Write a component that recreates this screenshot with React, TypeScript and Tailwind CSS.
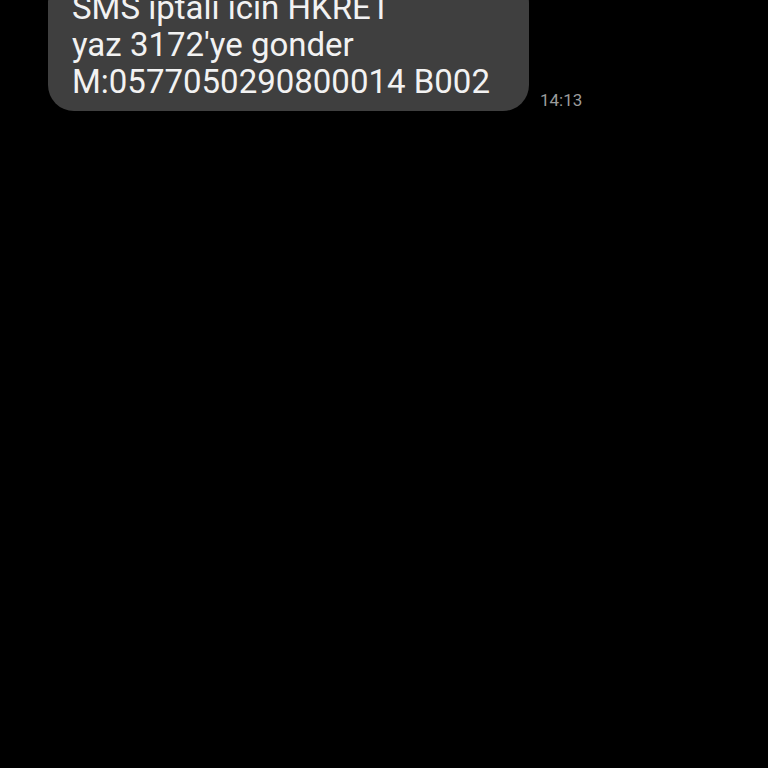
export default function App() {
  const lines = ["SMS iptali icin HKRET", "yaz 3172'ye gonder", "M:0577050290800014 B002"];

  return (
    <div className="w-[768px] h-[768px] bg-black overflow-hidden" style={{ fontFamily: "Roboto, 'Noto Sans', sans-serif" }}>
      <div className="flex items-end pl-[48px] mt-[-23px]">
        <div className="w-[481px] rounded-[26px] bg-[#3f3f3f] pl-[24px] pr-4 pt-[12px] pb-[11px]">
          {lines.map((l, i) => (
            <div key={i} className="text-[33px] leading-[37px] text-[#f2f2f2] whitespace-nowrap">
              {l}
            </div>
          ))}
        </div>
        <div className="ml-[11px] mb-[1px] text-[17px] leading-[20px] text-[#9c9c9c]">14:13</div>
      </div>
    </div>
  );
}
